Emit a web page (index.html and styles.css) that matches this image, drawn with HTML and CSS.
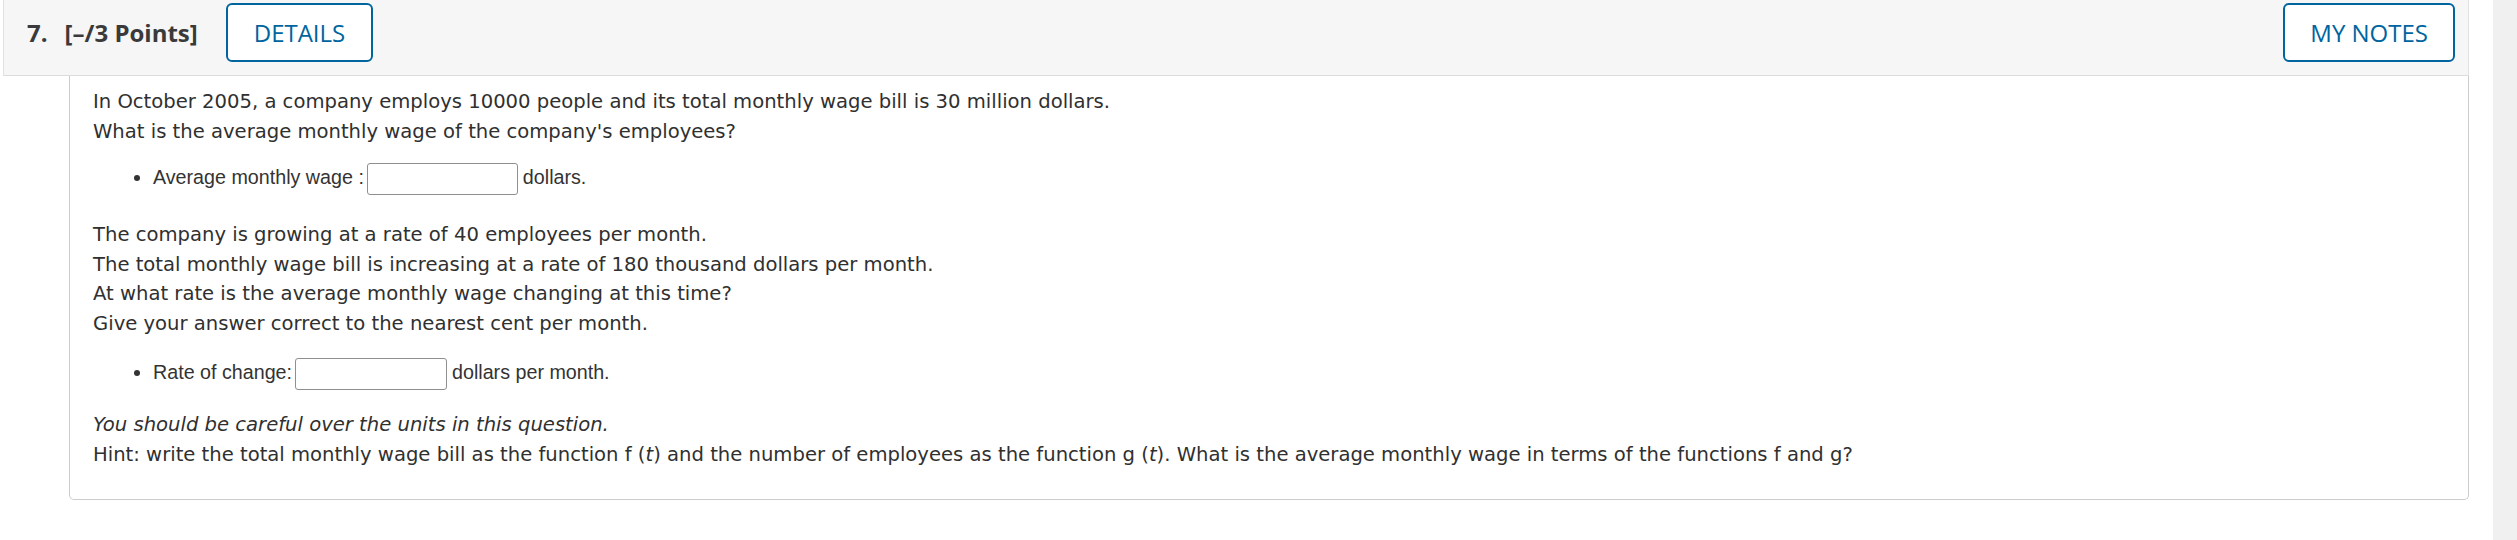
FILE: index.html
```html
<!DOCTYPE html>
<html lang="en">
<head>
<meta charset="utf-8">
<title>Question 7</title>
<link rel="stylesheet" href="styles.css">
</head>
<body>
<div class="page">
  <div class="main">
    <div class="qhead">
      <span class="qnum">7.</span>
      <span class="qpts">[–/3 Points]</span>
      <button class="btn btn-details" type="button">DETAILS</button>
      <button class="btn btn-notes" type="button">MY NOTES</button>
    </div>
    <div class="qbody">
      <p class="para">In October 2005, a company employs 10000 people and its total monthly wage bill is 30 million dollars.<br>What is the average monthly wage of the company's employees?</p>
      <ul class="answers answers-first">
        <li>Average monthly wage :<input class="ans ans-wide" type="text" aria-label="Average monthly wage">dollars.</li>
      </ul>
      <p class="para">The company is growing at a rate of 40 employees per month.<br>The total monthly wage bill is increasing at a rate of 180 thousand dollars per month.<br>At what rate is the average monthly wage changing at this time?<br>Give your answer correct to the nearest cent per month.</p>
      <ul class="answers answers-second">
        <li>Rate of change:<input class="ans" type="text" aria-label="Rate of change">dollars per month.</li>
      </ul>
      <p class="para"><em class="note">You should be careful over the units in this question.</em><br>Hint: write the total monthly wage bill as the function f (<i>t</i>) and the number of employees as the function g (<i>t</i>). What is the average monthly wage in terms of the functions f and g?</p>
    </div>
  </div>
  <div class="track"></div>
</div>
</body>
</html>
```
FILE: styles.css
```css
html, body {
  margin: 0;
  padding: 0;
  background: #ffffff;
}

.page {
  display: flex;
  min-height: 540px;
}

.main {
  flex: 1;
  margin-left: 3px;
  margin-right: 24px;
}

.track {
  width: 24px;
  background: #f0f0f0;
}

.qhead {
  display: flex;
  align-items: center;
  background: #f6f6f6;
  border-left: 1px solid #e2e2e2;
  border-right: 1px solid #e2e2e2;
  border-bottom: 1px solid #dcdcdc;
  padding: 3px 13px 13px 23px;
  height: 59px;
  font-family: "Open Sans", "Liberation Sans", sans-serif;
  color: #3a3a3a;
}

.qnum {
  font-size: 24px;
  font-weight: 700;
  margin-right: 17px;
}

.qpts {
  font-size: 24px;
  font-weight: 700;
}

.btn {
  height: 59px;
  box-sizing: border-box;
  border: 2px solid #00659e;
  border-radius: 6px;
  background: #ffffff;
  color: #00659e;
  font-family: "Open Sans", "Liberation Sans", sans-serif;
  font-size: 24px;
  font-weight: 400;
  padding: 0 26px;
}

.btn-details {
  margin-left: 28px;
}

.btn-notes {
  margin-left: auto;
  padding: 0 25px;
}

.qbody {
  margin-left: 66px;
  border: 1px solid #cccccc;
  border-top: none;
  border-radius: 0 0 5px 5px;
  padding: 11px 24px 30px 23px;
  font-family: "DejaVu Sans", Verdana, sans-serif;
  font-size: 19.6px;
  line-height: 29.5px;
  color: #303030;
}

.para {
  margin: 0;
}

.note {
  font-style: italic;
}

.answers {
  margin: 17px 0 25px 0;
  padding-left: 60px;
  font-family: "Liberation Sans", Arial, sans-serif;
  font-size: 19.7px;
  line-height: 29.5px;
  color: #333333;
}

.answers-second {
  margin: 20px 0 20px 0;
}

.ans {
  width: 152px;
  height: 32px;
  box-sizing: border-box;
  border: 1px solid #8f8f8f;
  border-radius: 3px;
  margin: 0 5px 0 3px;
  padding: 0 4px;
  vertical-align: middle;
  font-size: 16px;
  background: #ffffff;
}

.ans-wide {
  width: 151px;
}
```
